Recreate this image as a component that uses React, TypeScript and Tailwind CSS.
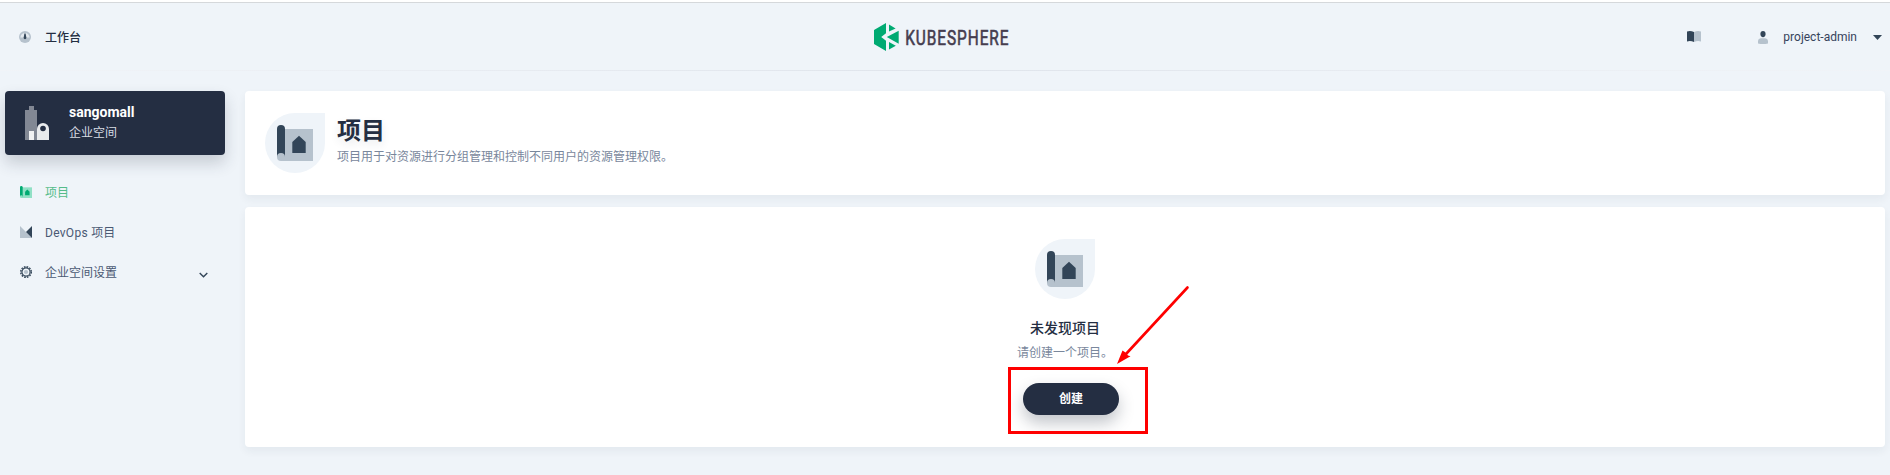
import React from "react";

function ProjectGlyph({ className, dark, light }: { className: string; dark: string; light: string }) {
  return (
    <svg className={className} viewBox="0 0 36 36">
      <path d="M4 4h32v32H4z" fill={light} />
      <path d="M0 4a4 4 0 0 1 8 0v28H0z" fill={dark} />
      <circle cx="4" cy="32" r="4" fill={light} />
      <path d="M15.3 28V17l6.7-6.3L28.7 17v11z" fill={dark} />
    </svg>
  );
}

function ProjectBadge() {
  return (
    <div className="flex h-[60px] w-[60px] shrink-0 rounded-full rounded-tr-none bg-[#eff4f9] p-3">
      <ProjectGlyph className="h-9 w-9" dark="#324558" light="#b6c2cd" />
    </div>
  );
}

function Logo() {
  return (
    <svg className="h-7 w-[142px] overflow-visible" viewBox="0 0 142 28">
      <path d="M12 0v10.2L7.2 14l4.8 3.8V28L0 21V7z" fill="#00aa72" />
      <path d="M15 1.6l6.6 3.8L15 8.6z" fill="#00aa72" />
      <path d="M24.7 7.8v13L12.8 14z" fill="#00aa72" />
      <path d="M15 19l6.8 3.7L15 26.4z" fill="#00aa72" />
      <text
        transform="translate(31.2 21.7) scale(0.76 1)"
        textLength="136"
        lengthAdjust="spacing"
        fontSize="20.3"
        fill="#453d4f"
        stroke="#453d4f"
        strokeWidth="0.6"
        fontFamily="Roboto, sans-serif"
      >
        KUBESPHERE
      </text>
    </svg>
  );
}

function Header() {
  return (
    <header className="flex h-[68px] shrink-0 flex-col">
      <div className="grid h-[67px] grid-cols-[1fr_142px_1fr] items-start">
        <div className="flex items-center pl-[19px] pt-[26px]">
          <svg className="-mt-[3px] h-3 w-3" viewBox="0 0 12 12">
            <circle cx="6" cy="6" r="6" fill="#b6c2cd" />
            <path d="M1.400 6.600a4.600 4.600 0 0 1 9.200 0z" fill="#e3e9ef" />
            <path d="M5.400 2.600h1.200l.8 4.200a1.400 1.400 0 0 1-2.800 0z" fill="#324558" />
          </svg>
          <span className="ml-3.5 text-xs leading-[18px] font-medium text-[#242e42]">工作台</span>
        </div>
        <div className="pt-5">
          <Logo />
        </div>
        <div className="flex items-center justify-end pt-[24px] pr-2">
          <svg className="-mt-0.5 mr-[57px] h-[11px] w-[14px]" viewBox="0 0 14 11">
            <path d="M0 .5Q3.500-.5 7 1v10Q3.500 9.500 0 10.500z" fill="#324558" />
            <path d="M14 .5Q10.500-.5 7 1v10q3.500-1.500 7-.5z" fill="#b6c2cd" />
          </svg>
          <svg className="h-[13px] w-[10px]" viewBox="0 0 10 13">
            <path d="M5 0c1.700 0 2.600 1.200 2.600 2.900S6.600 6.300 5 6.300 2.400 4.600 2.400 2.900 3.300 0 5 0z" fill="#324558" />
            <path d="M0 12.500V9.800Q.2 7.500 2.800 7.300h4.400Q9.800 7.500 10 9.800v2.700Q5 13.500 0 12.500z" fill="#b6c2cd" />
          </svg>
          <span className="ml-[15px] text-xs leading-5 text-[#36435c]">project-admin</span>
          <svg className="mt-px ml-4 h-[5px] w-[9px]" viewBox="0 0 9 5">
            <path d="M0 0h9L4.500 5z" fill="#324558" />
          </svg>
        </div>
      </div>
      <div className="h-px bg-linear-to-r from-[#f1f4f8] via-[#dfe4eb] to-[#f1f4f8]" />
    </header>
  );
}

function Sidebar() {
  return (
    <aside className="w-[220px] shrink-0">
      <div className="flex h-16 rounded bg-[#242e42] pl-5 shadow-[0_8px_16px_0_rgba(36,46,66,0.2)]">
        <svg className="mt-[15px] h-[34px] w-6" viewBox="0 0 24 34">
          <path d="M0 34V4h4V0h5v4h3v30z" fill="#828894" />
          <path d="M4 25h5v9H4z" fill="#f1f2f3" />
          <path d="M12 34V23a6 6 0 0 1 12 0v11z" fill="#e9ebed" />
          <circle cx="18" cy="22.500" r="2.800" fill="#242e42" />
        </svg>
        <div className="ml-5 pt-[11px]">
          <div className="text-sm leading-[21px] font-bold text-white">sangomall</div>
          <div className="text-xs leading-5 text-[#d8dce3]">企业空间</div>
        </div>
      </div>
      <nav className="mt-[17px] flex flex-col text-xs text-[#4a5974]">
        <a className="flex h-10 items-center pl-[15px] text-[#55bc8a]">
          <ProjectGlyph className="h-3 w-3" dark="#00aa72" light="#90e0c5" />
          <span className="mt-0.5 ml-[13px]">项目</span>
        </a>
        <a className="flex h-10 items-center pl-[15px]">
          <svg className="h-3 w-3" viewBox="0 0 12 12">
            <path d="M0 0l12 12H0z" fill="#b6c2cd" />
            <path d="M12 0v12L6 6z" fill="#324558" />
          </svg>
          <span className="mt-0.5 ml-[13px]"><span className="tracking-[0.3px]">DevOps </span>项目</span>
        </a>
        <a className="flex h-10 items-center pl-[15px]">
          <svg className="h-3 w-3" viewBox="0 0 12 12">
            <circle cx="6" cy="6" r="5.300" fill="none" stroke="#324558" strokeWidth="1.400" strokeDasharray="1.660 1.110" />
            <circle cx="6" cy="6" r="4.100" fill="#eff4f9" stroke="#324558" strokeWidth="1.200" />
            <circle cx="6" cy="6" r="2.100" fill="#b6c2cd" />
          </svg>
          <span className="mt-0.5 ml-[13px]">企业空间设置</span>
          <svg className="mt-[5px] mr-[17px] ml-auto h-1.5 w-[9px]" viewBox="0 0 9 6">
            <path d="M.7.9l3.800 3.800L8.300.9" fill="none" stroke="#324558" strokeWidth="1.400" />
          </svg>
        </a>
      </nav>
    </aside>
  );
}

function Highlight() {
  return (
    <svg className="pointer-events-none absolute top-[284px] left-[1007px] h-[152px] w-[184px]" viewBox="0 0 184 152">
      <path d="M2.500 84.500h137v64h-137z" fill="none" stroke="#fe0000" strokeWidth="3" />
      <path d="M180.500 3.500L119 70" stroke="#fe0000" strokeWidth="2.600" strokeLinecap="round" />
      <path d="M110 80l5.500-13.500 3 2 2.500 3 2.500.8z" fill="#fe0000" />
    </svg>
  );
}

export default function App() {
  return (
    <div className="relative flex h-[475px] w-[1890px] flex-col overflow-hidden bg-[#eff4f9] [font-family:Roboto,'Noto_Sans_CJK_SC',sans-serif]">
      <div className="h-[3px] shrink-0 border-b border-[#d5d8db] bg-white" />
      <Header />
      <div className="flex gap-5 px-[5px] pt-5">
        <Sidebar />
        <main className="flex min-w-0 grow flex-col gap-3">
          <section className="flex h-[104px] rounded bg-white px-5 pt-[22px] shadow-[0_4px_8px_0_rgba(36,46,66,0.06)]">
            <ProjectBadge />
            <div className="ml-3 pt-0.5">
              <h1 className="text-2xl leading-8 font-bold text-[#242e42] [text-shadow:0_4px_8px_rgba(36,46,66,0.1)]">项目</h1>
              <p className="text-xs leading-5 text-[#79879c]">项目用于对资源进行分组管理和控制不同用户的资源管理权限。</p>
            </div>
          </section>
          <section className="flex h-60 flex-col items-center rounded bg-white pt-8 shadow-[0_4px_8px_0_rgba(36,46,66,0.06)]">
            <ProjectBadge />
            <h2 className="mt-[19px] text-sm leading-5 font-medium text-[#242e42]">未发现项目</h2>
            <p className="mt-[5px] text-xs leading-5 text-[#79879c]">请创建一个项目。</p>
            <button className="mt-5 ml-3 h-8 w-24 rounded-full bg-[#242e42] text-xs font-bold text-white shadow-[0_8px_16px_0_rgba(36,46,66,0.28)]">
              创建
            </button>
          </section>
        </main>
      </div>
      <Highlight />
    </div>
  );
}
